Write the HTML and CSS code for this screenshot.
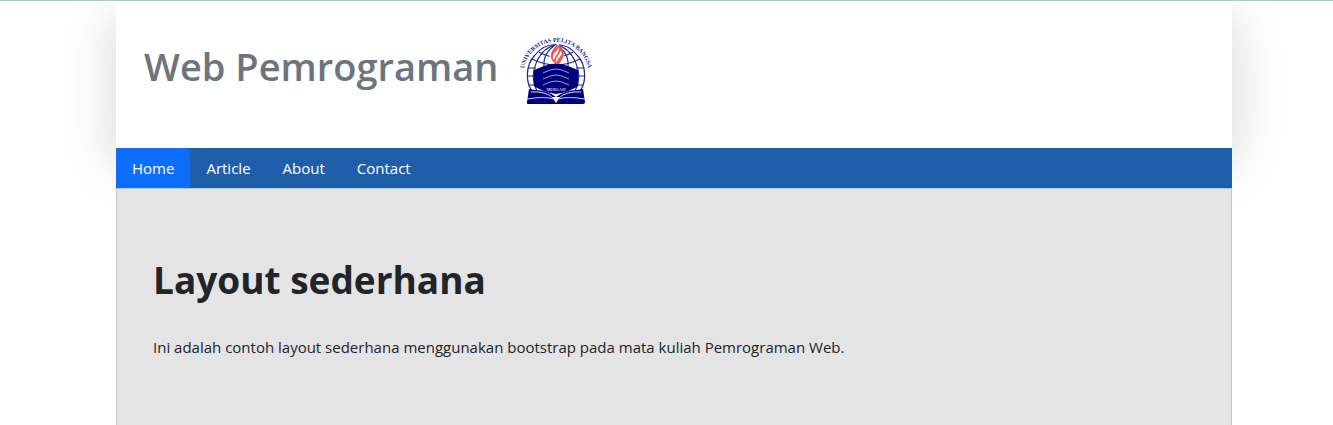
FILE: index.html
```html
<!DOCTYPE html>
<html lang="id">
<head>
<meta charset="utf-8">
<title>Web Pemrograman</title>
<link rel="stylesheet" href="styles.css">
</head>
<body>
<div class="page">
  <header class="header">
    <h1 class="brand">Web Pemrograman</h1>
    <svg class="logo" viewBox="15 10 74 70" role="img" aria-label="Universitas Pelita Bangsa">
      <path id="arc" d="M19 54A32.500 32.500 0 1 1 83 54" fill="none"/>
      <text class="logo-ring"><textPath href="#arc" startOffset="50%" text-anchor="middle">UNIVERSITAS PELITA BANGSA</textPath></text>
      <g class="globe">
        <path d="M29 67 C20 59 20 39 30 29 C41 15 61 15 72 29 C82 39 82 59 73 67"/>
        <path d="M51 19V42M32 65C22 47 34 22 51 19C68 22 80 47 70 65M39 41C38 31 43 23 51 19C59 23 64 31 63 41"/>
        <path d="M34 26Q51 36 68 26M27 33Q51 45 75 33M23 42H31M71 42H79M22 50H30M72 50H80M24 59H30M72 59H78"/>
      </g>
      <path class="flame-edge" d="M53 17C45 24 43 28 46 33L51 39C58 37 61 31 58 26Z"/>
      <path class="flame" d="M55 18C54 24 46 25 47 32C47 34 49 35 50 36C49 29 56 29 55 22C61 29 56 33 53 38"/>
      <path class="flame" d="M52 19C51 23 46 25 47 30M58 27C58 31 53 32 52 37"/>
      <path class="ink" d="M29 44L39 40Q51 35 63 40L73 44V60Q67 65 51 68Q35 65 29 60Z"/>
      <path class="paper-line" d="M38 47L45 44Q51 42 57 44L64 47M38 53L45 50Q51 48 57 50L64 53M38 59L45 56Q51 54 57 56L64 59"/>
      <text class="motto" x="51" y="65" text-anchor="middle">MERGASI</text>
      <path class="ink" d="M24 63L30 64Q42 64 51 71Q60 64 72 64L78 63L80 76Q80 78 78 78H24Q21 78 22 76Z"/>
      <path class="page-line" d="M26 66Q41 65 48 72H54Q61 65 76 66M22 73Q40 70 48 73M80 73Q62 70 54 73"/>
      <path class="fold" d="M47 71H55L51 77Z"/>
    </svg>
  </header>
  <nav class="nav">
    <a class="nav-link active" href="#home" aria-current="page">Home</a>
    <a class="nav-link" href="#article">Article</a>
    <a class="nav-link" href="#about">About</a>
    <a class="nav-link" href="#contact">Contact</a>
  </nav>
  <main class="content">
    <h2 class="title">Layout sederhana</h2>
    <p class="lead">Ini adalah contoh layout sederhana menggunakan bootstrap pada mata kuliah Pemrograman Web.</p>
  </main>
</div>
</body>
</html>
```
FILE: styles.css
```css
* { box-sizing: border-box; }
html { min-height: 100%; display: flex; overflow: hidden; }
body {
  flex: 1;
  display: flex;
  margin: 0;
  padding: 0 101px 0 116px;
  border-top: 1px solid #b4c8bc;
  background: #fff;
  color: #212529;
  font-family: "Segoe UI", "Open Sans", "Noto Sans", sans-serif;
  font-size: 15px;
  line-height: 24px;
}
.page { flex: 1; display: flex; flex-direction: column; }
.header {
  display: flex;
  align-items: flex-start;
  gap: 22px;
  padding: 35px 28px 42px;
  box-shadow: 0 16px 48px rgba(0, 0, 0, .175);
}
.brand {
  margin: 6px 0 0;
  color: #6c757d;
  font-size: 38px;
  font-weight: 600;
  line-height: 48px;
}
.logo { width: 74px; height: 70px; overflow: visible; }
.logo-ring { fill: #24248e; font: bold 6px "Liberation Serif", serif; }
.globe { fill: none; stroke: #26268f; stroke-width: 1.2; }
.ink { fill: #00007f; }
.flame-edge { fill: #fff; }
.flame { fill: none; stroke: #f55050; stroke-width: 1.8; }
.paper-line { fill: none; stroke: #9c9cce; stroke-width: 1; }
.motto { fill: #d0d0ec; font: bold 4px "Liberation Serif", serif; }
.page-line { fill: none; stroke: #d0d0ea; stroke-width: 1; }
.fold { fill: #fff; }
.nav { display: flex; position: relative; background: #1f5faa; }
.nav-link {
  padding: 8px 16px;
  border-radius: 4px;
  color: #fff;
  text-decoration: none;
}
.active { background: #0d6efd; }
.content {
  flex: 1;
  position: relative;
  padding: 67px 36px 64px;
  border: 1px solid #c4c4c4;
  border-bottom: 0;
  background: #e4e4e4;
}
.title { margin: 0; font-size: 37px; font-weight: 700; line-height: 48px; }
.lead { margin: 31px 0 0; }
```
